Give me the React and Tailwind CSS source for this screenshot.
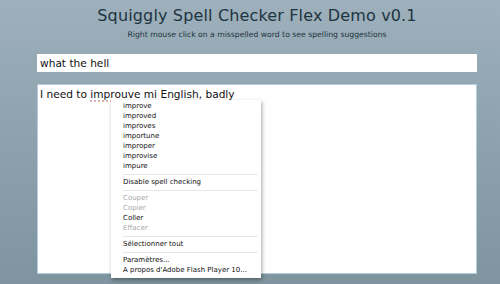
import React from 'react';

const font = { fontFamily: '"DejaVu Sans", Verdana, sans-serif' };

const Sep = () => <div className="mt-[3px] mb-[2px] h-px bg-[#e6e6e6]" />;

const Item = ({ children, disabled }) => (
  <div className={`h-[10px] leading-[10px] whitespace-nowrap ${disabled ? 'text-[#a8a8a8]' : 'text-[#111]'}`}>{children}</div>
);

export default function App() {
  const suggestions = ['improve', 'improved', 'improves', 'importune', 'improper', 'improvise', 'impure'];
  return (
    <div className="w-[500px] h-[284px] overflow-hidden bg-gradient-to-b from-[#9db0bb] to-[#7e949f] flex flex-col items-center pl-[14px]" style={font}>
      <h1 className="mt-[6px] text-[16px] leading-[20px] text-[#1d3441] tracking-[0.15px]">Squiggly Spell Checker Flex Demo v0.1</h1>
      <p className="mt-[4px] text-[7.7px] leading-[10px] text-[#1d3441]">Right mouse click on a misspelled word to see spelling suggestions</p>
      <div className="mt-[14px] w-[440px] h-[18px] bg-white pl-[3px] text-[10.6px] leading-[18px] text-[#111]">what the hell</div>
      <div className="relative mt-[12px] w-[440px] h-[190px] bg-white border border-[#b5cde0] pl-[2px] pt-[1px] text-[10.6px] leading-[16px] text-[#111]">
        <span>I need to </span>
        <span className="underline decoration-dotted decoration-[#d8b4b8] decoration-2 underline-offset-2">improuve</span>
        <span> mi English, badly</span>
        <div className="absolute left-[73px] top-[15px] w-[150px] h-[178px] bg-white shadow-[1px_2px_4px_rgba(0,0,0,0.35)] pl-[12px] pr-[3px] pt-[1px] text-[7px]">
          {suggestions.map((s) => <Item key={s}>{s}</Item>)}
          <Sep />
          <Item>Disable spell checking</Item>
          <Sep />
          <Item disabled>Couper</Item>
          <Item disabled>Copier</Item>
          <Item>Coller</Item>
          <Item disabled>Effacer</Item>
          <Sep />
          <Item>Sélectionner tout</Item>
          <Sep />
          <Item>Paramètres...</Item>
          <Item>A propos d'Adobe Flash Player 10...</Item>
        </div>
      </div>
    </div>
  );
}
